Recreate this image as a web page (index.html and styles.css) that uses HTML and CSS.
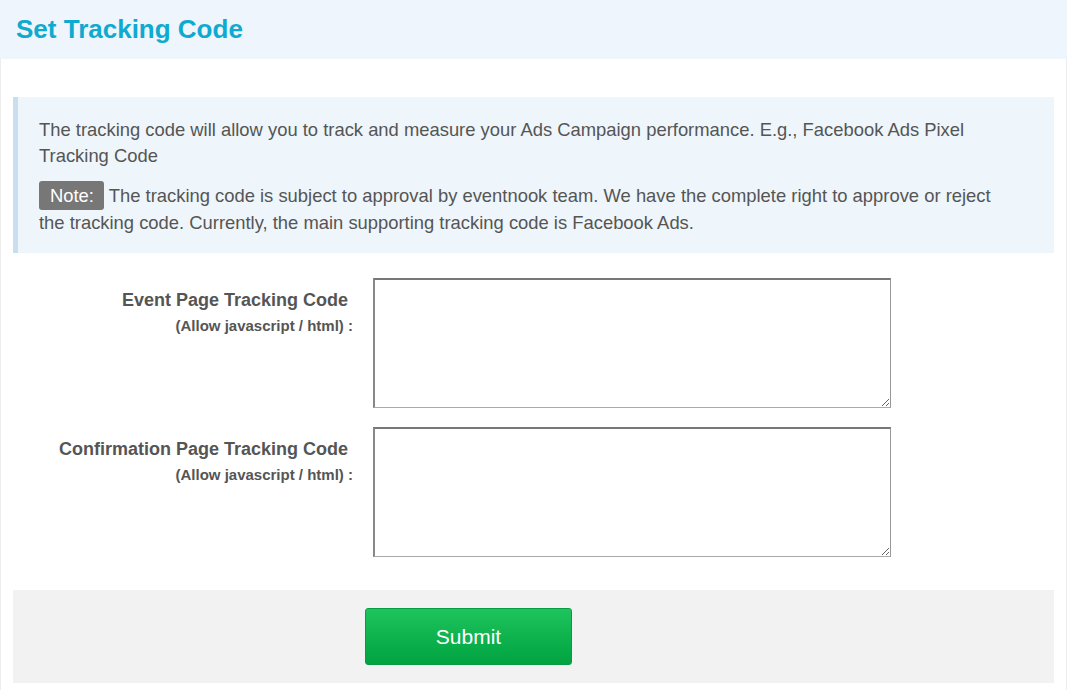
FILE: index.html
```html
<!DOCTYPE html>
<html lang="en">
<head>
    <meta charset="UTF-8">
    <meta name="viewport" content="width=device-width, initial-scale=1.0">
    <title>Set Tracking Code</title>
    <link rel="stylesheet" href="styles.css">
</head>
<body>
    <div class="page">
        <div class="page-header">
            <h2>Set Tracking Code</h2>
        </div>

        <div class="page-body">
            <div class="info-box">
                <p>The tracking code will allow you to track and measure your Ads Campaign performance. E.g., Facebook Ads Pixel Tracking Code</p>
                <p><span class="badge">Note:</span> The tracking code is subject to approval by eventnook team. We have the complete right to approve or reject the tracking code. Currently, the main supporting tracking code is Facebook Ads.</p>
            </div>

            <form class="tracking-form">
                <div class="form-row">
                    <label for="eventCode">
                        <span class="label-main">Event Page Tracking Code</span>
                        <span class="label-sub">(Allow javascript / html) :</span>
                    </label>
                    <textarea id="eventCode"></textarea>
                </div>

                <div class="form-row">
                    <label for="confirmCode">
                        <span class="label-main">Confirmation Page Tracking Code</span>
                        <span class="label-sub">(Allow javascript / html) :</span>
                    </label>
                    <textarea id="confirmCode"></textarea>
                </div>

                <div class="form-actions">
                    <button type="button" class="btn-submit">Submit</button>
                </div>
            </form>
        </div>
    </div>
</body>
</html>
```

FILE: styles.css
```css
body {
    margin: 0;
    font-family: "Liberation Sans", Arial, sans-serif;
    color: #555;
    background: #fff;
}

.page {
    width: 1065px;
    min-height: 690px;
    border-left: 1px solid #ededed;
    border-right: 1px solid #ededed;
}

.page-header {
    height: 59px;
    background-color: #eef5fc;
    display: flex;
    align-items: center;
    padding-left: 16px;
    margin-left: -1px;
    margin-right: -1px;
}

.page-header h2 {
    margin: 0;
    font-size: 26px;
    font-weight: bold;
    color: #0eaad0;
}

.page-body {
    padding: 38px 12px 0;
}

/* info box */
.info-box {
    background-color: #eef5fb;
    border-left: 5px solid #c9def0;
    padding: 20px 45px 17px 21px;
    font-size: 18.4px;
    line-height: 26px;
}

.info-box p {
    margin: 0 0 12px;
}

.info-box p:last-child {
    margin-bottom: 0;
}

.badge {
    display: inline-block;
    background-color: #777;
    color: #fff;
    line-height: 21px;
    padding: 4px 10px 4px 11px;
    border-radius: 3px;
}

/* form */
.tracking-form {
    margin-top: 25px;
}

.form-row {
    display: flex;
    gap: 20px;
    margin-bottom: 19px;
}

.form-row label {
    width: 340px;
    padding-top: 9px;
    text-align: right;
    font-weight: bold;
    line-height: 26px;
}

.label-main {
    display: block;
    font-size: 18px;
    padding-right: 5px;
}

.label-sub {
    display: block;
    font-size: 15px;
}

.tracking-form textarea {
    width: 518px;
    height: 130px;
    box-sizing: border-box;
    border-top: 2px solid #777;
    border-left: 2px solid #888;
    border-right: 1px solid #999;
    border-bottom: 1px solid #aaa;
    margin: 0;
    font-family: "Liberation Mono", monospace;
}

.form-actions {
    margin-top: 33px;
    background-color: #f2f2f2;
    padding: 18px 0 18px 352px;
}

.btn-submit {
    width: 207px;
    height: 57px;
    border: 1px solid #079c43;
    border-radius: 3px;
    background: linear-gradient(to bottom, #1ec45c, #00a340);
    color: #fff;
    font-family: "Liberation Sans", Arial, sans-serif;
    font-size: 21px;
    cursor: pointer;
}
```
